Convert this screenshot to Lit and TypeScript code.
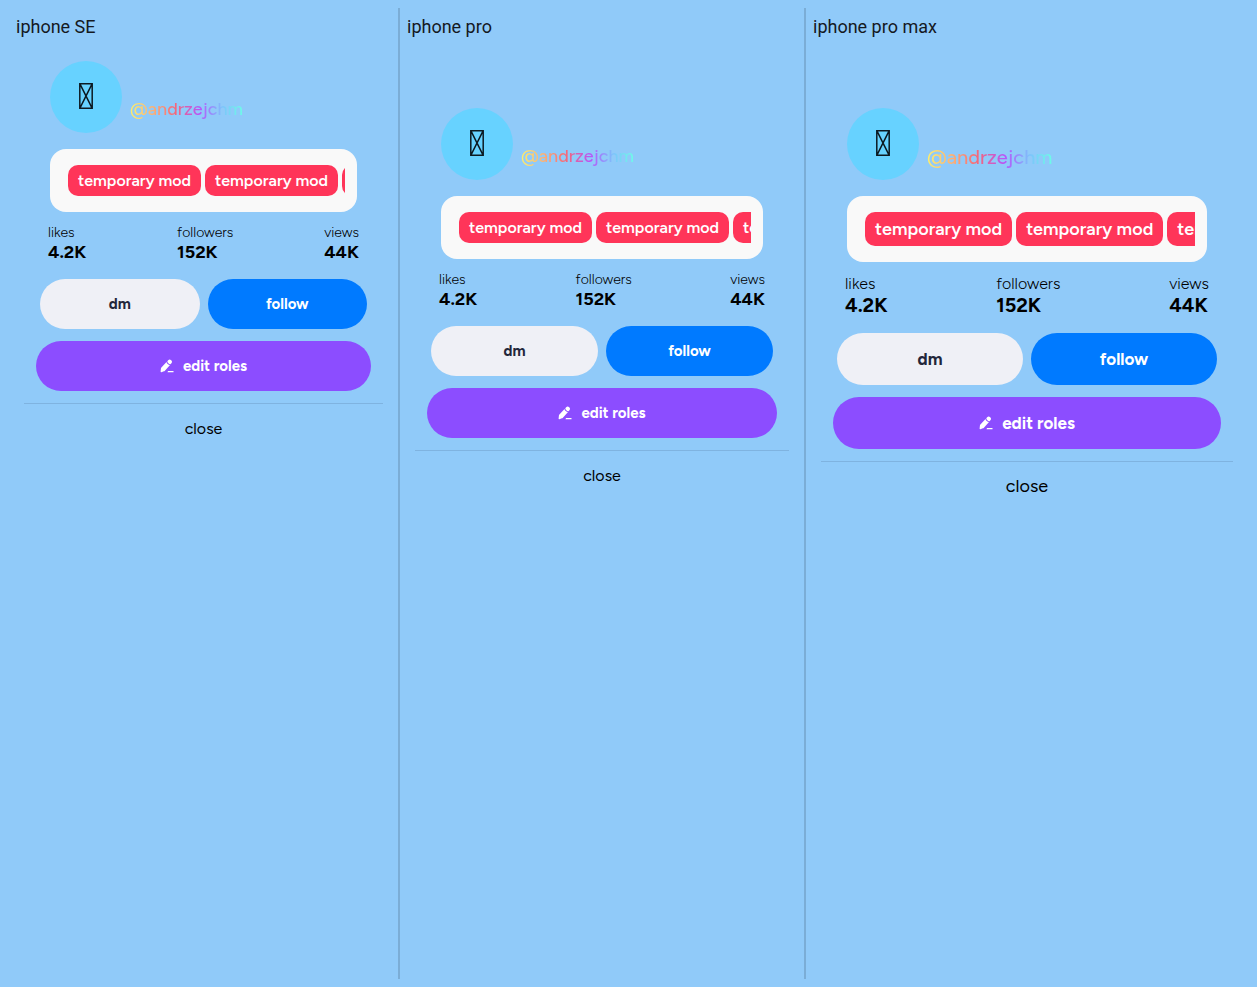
import { LitElement, html, css } from "lit";
import { customElement, property } from "lit/decorators.js";

@customElement("profile-sheet")
class ProfileSheet extends LitElement {
  @property() name = "";
  @property() size = "regular";
  @property({ type: Boolean }) notch = false;

  static styles = css`
    :host {
      display: block;
      min-width: 0;
    }
    .column {
      padding: 8px 0 0;
      --pill: 16px;
      --pill-line: 19px;
      --user: 18px;
      --user-pad: 12px;
      --label: 14px;
      --label-line: 17px;
      --value: 18px;
      --value-line: 22px;
      --button: 15px;
      --button-height: 50px;
      --close: 16px;
      --close-line: 22px;
      font-family: Figtree, Lato, "Liberation Sans", sans-serif;
      color: #000;
    }
    .column.large {
      --pill: 18px;
      --pill-line: 22px;
      --user: 20px;
      --user-pad: 11px;
      --label: 16px;
      --label-line: 20px;
      --value: 20px;
      --value-line: 23px;
      --button: 17px;
      --button-height: 52px;
      --close: 18px;
      --close-line: 20px;
    }
    .title {
      margin: 0;
      font: 400 18px/21px Roboto, sans-serif;
      color: #15191f;
    }
    .screen {
      padding-top: 24px;
    }
    .screen.notch {
      padding-top: 71px;
    }
    .head {
      display: flex;
      align-items: flex-end;
      gap: 8px;
      margin: 0 34px 16px;
    }
    .avatar {
      display: flex;
      align-items: center;
      justify-content: center;
      width: 72px;
      height: 72px;
      border-radius: 50%;
      background: #67d2ff;
      padding-bottom: 2px;
      box-sizing: border-box;
      flex: none;
    }
    .user {
      font-size: var(--user);
      font-weight: 500;
      line-height: 24px;
      margin-bottom: var(--user-pad);
      color: transparent;
      background: linear-gradient(90deg, #fff06a 0%, #fdb074 20%, #f4677a 40%, #b655fa 62%, #7cc4fb 82%, #6cffe6 100%);
      -webkit-background-clip: text;
      background-clip: text;
    }
    .card {
      margin: 0 34px 12px;
      padding: 16px 12px 16px 18px;
      background: #f9f9f9;
      border-radius: 16px;
    }
    .pills {
      display: flex;
      gap: 4px;
      margin: 0;
      padding: 0;
      list-style: none;
      overflow: hidden;
    }
    .pill {
      flex: none;
      padding: 6px 10px;
      border-radius: 10px;
      background: #ff3559;
      color: #fff;
      font-size: var(--pill);
      font-weight: 600;
      line-height: var(--pill-line);
      white-space: nowrap;
    }
    .stats {
      display: flex;
      justify-content: space-between;
      margin: 0 32px 16px;
    }
    .label {
      font-size: var(--label);
      font-weight: 300;
      line-height: var(--label-line);
      color: #000;
    }
    .value {
      margin: 0;
      font-size: var(--value);
      line-height: var(--value-line);
      font-weight: 700;
    }
    .actions {
      display: flex;
      gap: 8px;
      margin: 0 24px 12px;
    }
    button {
      border: 0;
      padding: 0;
      margin: 0;
      font-family: inherit;
      cursor: pointer;
    }
    .action {
      display: flex;
      align-items: center;
      justify-content: center;
      gap: 9px;
      flex: 1;
      height: var(--button-height);
      border-radius: 26px;
      font-size: var(--button);
      font-weight: 700;
      color: #fff;
    }
    .dm {
      background: #eff0f6;
      color: #23263a;
    }
    .follow {
      background: #007aff;
    }
    .edit {
      background: #8c4dff;
    }
    .wide {
      display: flex;
      margin: 0 20px 12px;
    }
    .foot {
      margin: 0 8px;
      border-top: 1px solid #7fb3e0;
    }
    .close {
      display: block;
      width: 100%;
      padding: 14px 0;
      background: none;
      color: #000;
      font-size: var(--close);
      line-height: var(--close-line);
    }
  `;

  render() {
    const stats = [["likes", "4.2K"], ["followers", "152K"], ["views", "44K"]];
    return html`
      <section class="column ${this.size}">
        <h2 class="title">${this.name}</h2>
        <div class="screen ${this.notch ? "notch" : ""}">
          <div class="head">
            <div class="avatar">
              <svg width="14" height="26" viewBox="0 0 14 26" fill="none" stroke="#0c1a22" stroke-width="1.5" aria-hidden="true">
                <path d="M.8.7h12.4v24.6H.8zM.8.7l12.4 24.6M13.2.7.8 25.3" />
              </svg>
            </div>
            <span class="user">@andrzejchm</span>
          </div>
          <div class="card">
            <ul class="pills">
              ${[1, 2, 3].map(() => html`<li class="pill">temporary mod</li>`)}
            </ul>
          </div>
          <dl class="stats">
            ${stats.map(([label, value]) => html`<div><dt class="label">${label}</dt><dd class="value">${value}</dd></div>`)}
          </dl>
          <div class="actions">
            <button class="action dm">dm</button>
            <button class="action follow">follow</button>
          </div>
          <div class="wide">
            <button class="action edit">
              <svg width="14" height="14" viewBox="0 0 14 14" fill="#fff" aria-hidden="true">
                <path d="M1.4 13.2c-.5.1-.9-.2-.8-.8L.9 9.700c0-.4.2-.8.500-1.100L6.500 3.100c.4 1.700 1.700 2.800 3.500 3L4.900 11.700c-.3.3-.6.500-1 .600z" />
                <path d="M7.300 2.300 8.200 1.300c.9-1 2-.9 3 0s1.100 1.900.2 2.900l-.9 1C8.800 5.100 7.600 4 7.300 2.300z" />
                <path d="M8 12.100h5.500v1.200H7.500z" />
              </svg>
              <span>edit roles</span>
            </button>
          </div>
          <div class="foot"><button class="close">close</button></div>
        </div>
      </section>
    `;
  }
}

@customElement("app-root")
class AppRoot extends LitElement {
  static styles = css`
    :host {
      display: block;
      background: #90caf9;
    }
    .board {
      display: grid;
      grid-template-columns: 391fr 406fr 444fr;
      min-height: 100vh;
      padding: 8px;
      box-sizing: border-box;
    }
    .device {
      padding: 0 7px;
      border: solid #7badd6;
      border-width: 0 1px;
    }
    .device:first-child {
      border-left-color: transparent;
    }
    .device:last-child {
      border-right-color: transparent;
    }
  `;

  render() {
    return html`
      <main class="board">
        <profile-sheet class="device" name="iphone SE"></profile-sheet>
        <profile-sheet class="device" name="iphone pro" notch></profile-sheet>
        <profile-sheet class="device" name="iphone pro max" size="large" notch></profile-sheet>
      </main>
    `;
  }
}
